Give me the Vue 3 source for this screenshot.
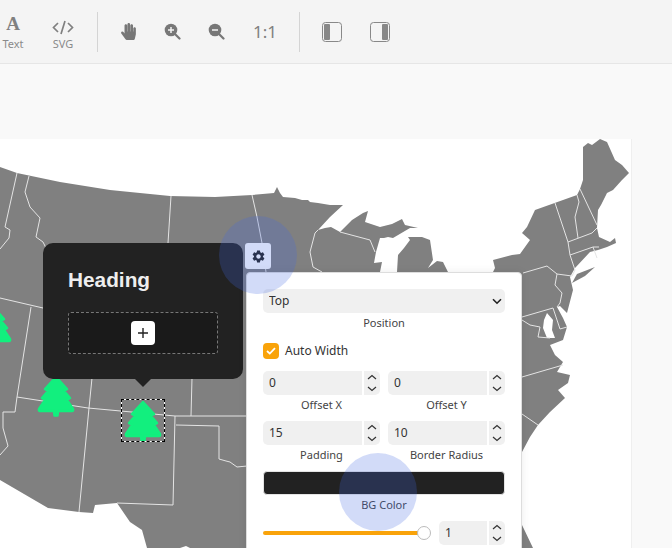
<script setup>
const land = `M0 167 L17 173 L60 182 L110 190 L170 196 L215 197 L252 195 L274 193 L277 187 L280 193 L283 197 L295 198 L302 200 L308 200 L310 202 L318 203 L330 205 L343 205
L330 217 L318 230 L325 228 L331 227 L340 232 L352 220 L363 213 L368 211 L365 222 L380 227 L392 224 L402 219 L405 225 L418 228 L410 228 L393 238 L388 237 L384 238 L380 238
L376 252 L374 263 L382 262 L380 272 L397 272 L398 255 L404 248 L410 240 L408 237 L422 237 L430 240 L433 260 L428 268 L437 261 L443 262 L448 272
L470 272 L493 272 L495 268 L493 260 L512 255 L520 254 L530 240 L522 233 L527 227 L535 210 L577 195 L580 189 L583 180 L583 147 L588 143 L592 145 L600 139 L607 142 L615 160 L622 165 L629 173 L622 180 L613 190 L607 193 L601 205 L598 210 L597 228 L599 237 L610 242 L615 238 L616 243 L607 247 L598 250 L590 252
L575 268 L570 277 L573 290 L567 313 L560 306 L557 307 L563 318 L567 327 L563 340 L550 345 L555 355 L563 362 L557 372 L570 375 L568 383 L558 390 L565 398 L550 412 L538 425 L530 437 L522 452
L522 525 L533 548 L190 548 L186 546 L180 548 L147 548 L142 530 L130 522 L117 503 L95 505 L93 513 L79 512 L48 508 L0 480 Z`

const islands = [
  'M572 283 L577 274 L595 267 L585 276 Z'
]

const water = [
  'M547 313 L553 320 L552 330 L555 338 L547 338 L543 328 L544 320 Z'
]

const borders = [
  'M17 173 L5 227 L10 230 L9 238 L0 249',
  'M29 176 L25 192 L30 207 L40 218 L36 237 L43 242 L47 250',
  'M171 196 L168 243',
  'M252 195 L257 217 L262 243 L266 272',
  'M318 230 L315 233 L310 252 L313 267 L322 272',
  'M340 232 L370 240 L375 252',
  'M0 298 L43 308',
  'M31 307 L17 397 L88 408 L175 416 L246 416',
  'M92 378 L89 408 L79 512',
  'M192 378 L191 416',
  'M175 416 L173 505 L117 503',
  'M176 425 L219 426 L219 459 L226 461 L230 462 L237 467 L247 466',
  'M17 397 L15 412 L3 412 L3 428 L8 446 L0 455',
  'M555 203 L568 242 L570 255 L575 270 L572 276',
  'M577 195 L579 202 L575 217 L578 238',
  'M580 189 L597 225',
  'M568 242 L592 233 L597 228',
  'M570 255 L593 247 L599 247',
  'M593 247 L597 258',
  'M523 273 L547 266 L557 274 L572 276',
  'M557 274 L555 285 L562 293 L560 303 L557 307',
  'M522 317 L553 308 L560 329 L567 327',
  'M522 320 L530 325 L540 327 L538 337 L550 338',
  'M522 377 L563 365',
  'M522 414 L538 425'
]

const tree = 'M19 2 L30 14 L27 16 L33 23 L30 25 L36 34 Q36.500 36 35 36 L21 36 L20.500 40.500 L17.500 40.500 L17 36 L3 36 Q1.500 36 2 34 L8 25 L5 23 L11 16 L8 14 Z'

const markers = [
  { id: 1, left: -26, top: 166 },
  { id: 2, left: 37, top: 236 },
  { id: 3, left: 124, top: 261 }
]

const campos = [
  [
    { valor: '0', etiqueta: 'Offset X' },
    { valor: '0', etiqueta: 'Offset Y' }
  ],
  [
    { valor: '15', etiqueta: 'Padding' },
    { valor: '10', etiqueta: 'Border Radius' }
  ]
]
</script>

<template>
  <div class="page">
    <header class="toolbar">
      <div class="tool first">
        <span class="letter">A</span>
        <span class="tool-label">Text</span>
      </div>
      <div class="tool">
        <svg width="22" height="15" viewBox="0 0 22 15" fill="none" stroke="#808080" stroke-width="1.7">
          <path d="M6 3 L1.5 7.500 L6 12 M16 3 L20.500 7.500 L16 12 M13 1 L9 14" />
        </svg>
        <span class="tool-label">SVG</span>
      </div>
      <div class="sep"></div>
      <div class="icon-btn">
        <svg width="15" height="17" viewBox="0 0 448 512" fill="#777">
          <path d="M408.781 128.007C386.356 127.578 368 146.36 368 168.79V256h-8V79.79c0-22.43-18.356-41.212-40.781-40.783C297.488 39.423 280 57.169 280 79v177h-8V40.79C272 18.36 253.644-.422 231.219.007 209.488.423 192 18.169 192 40v216h-8V80.79c0-22.43-18.356-41.212-40.781-40.783C121.488 40.423 104 58.169 104 80v235.992l-31.648-43.519c-12.993-17.866-38.009-21.817-55.877-8.823-17.865 12.994-21.815 38.01-8.822 55.877l125.601 172.705A48 48 0 0 0 171.074 512h197.007c22.278 0 41.63-15.308 46.714-36.993l26.212-111.397a192.011 192.011 0 0 0 5.01-43.824V168c-.017-21.912-17.611-39.575-39.236-39.993z" />
        </svg>
      </div>
      <div class="icon-btn">
        <svg width="17" height="17" viewBox="0 0 17 17">
          <circle cx="7" cy="7" r="6.3" fill="#777" />
          <path d="M11 11 L15.500 15.500" stroke="#777" stroke-width="2.2" stroke-linecap="round" />
          <path d="M4 7 H10 M7 4 V10" stroke="#f4f4f4" stroke-width="1.5" />
        </svg>
      </div>
      <div class="icon-btn">
        <svg width="17" height="17" viewBox="0 0 17 17">
          <circle cx="7" cy="7" r="6.3" fill="#777" />
          <path d="M11 11 L15.500 15.500" stroke="#777" stroke-width="2.2" stroke-linecap="round" />
          <path d="M4 7 H10" stroke="#f4f4f4" stroke-width="1.5" />
        </svg>
      </div>
      <div class="icon-btn ratio">1:1</div>
      <div class="sep second"></div>
      <div class="icon-btn side">
        <svg width="20" height="20" viewBox="0 0 20 20">
          <rect x="0.5" y="0.5" width="19" height="19" rx="3" fill="none" stroke="#888" />
          <rect x="2" y="2" width="6" height="16" rx="1" fill="#888" />
        </svg>
      </div>
      <div class="icon-btn side">
        <svg width="20" height="20" viewBox="0 0 20 20">
          <rect x="0.5" y="0.5" width="19" height="19" rx="3" fill="none" stroke="#888" />
          <rect x="12" y="2" width="6" height="16" rx="1" fill="#888" />
        </svg>
      </div>
    </header>

    <main class="workspace">
      <section class="canvas">
        <svg class="map" width="630" height="409" viewBox="0 139 630 409">
          <path :d="land" fill="#808080" />
          <path v-for="isla in islands" :key="isla" :d="isla" fill="#808080" />
          <path v-for="agua in water" :key="agua" :d="agua" fill="#fff" />
          <path
            v-for="linea in borders"
            :key="linea"
            :d="linea"
            fill="none"
            stroke="#e4e4e4"
            stroke-width="1"
            stroke-linejoin="round"
          />
        </svg>

        <svg
          v-for="m in markers"
          :key="m.id"
          class="marker"
          :style="{ left: m.left + 'px', top: m.top + 'px' }"
          width="38"
          height="42"
          viewBox="0 0 38 42"
        >
          <path :d="tree" fill="#12ef7e" stroke="#12ef7e" stroke-width="2.5" stroke-linejoin="round" />
        </svg>
        <div class="selection"></div>

        <div class="popup">
          <h2>Heading</h2>
          <div class="dropzone">
            <button class="add">
              <svg width="10" height="10" viewBox="0 0 10 10">
                <path d="M5 0 V10 M0 5 H10" stroke="#222" stroke-width="1.4" />
              </svg>
            </button>
          </div>
        </div>

        <button class="gear">
          <svg width="15" height="15" viewBox="0 0 24 24" fill="#222">
            <path fill-rule="evenodd" d="M19.14,12.94c0.04-0.3,0.06-0.61,0.06-0.94c0-0.32-0.02-0.64-0.07-0.94l2.03-1.58c0.18-0.14,0.23-0.41,0.12-0.61 l-1.92-3.32c-0.12-0.22-0.37-0.29-0.59-0.22l-2.39,0.96c-0.5-0.38-1.03-0.7-1.62-0.94L14.4,2.81c-0.04-0.24-0.24-0.41-0.48-0.41 h-3.84c-0.24,0-0.43,0.17-0.47,0.41L9.25,5.35C8.66,5.59,8.12,5.92,7.63,6.29L5.24,5.33c-0.22-0.08-0.47,0-0.59,0.22L2.74,8.87 C2.62,9.08,2.66,9.34,2.86,9.48l2.03,1.58C4.84,11.36,4.8,11.69,4.8,12s0.02,0.64,0.07,0.94l-2.03,1.58 c-0.18,0.14-0.23,0.41-0.12,0.61l1.92,3.32c0.12,0.22,0.37,0.29,0.59,0.22l2.39-0.96c0.5,0.38,1.03,0.7,1.62,0.94l0.36,2.54 c0.05,0.24,0.24,0.41,0.48,0.41h3.84c0.24,0,0.44-0.17,0.47-0.41l0.36-2.54c0.59-0.24,1.13-0.56,1.62-0.94l2.39,0.96 c0.22,0.08,0.47,0,0.59-0.22l1.92-3.32c0.12-0.22,0.07-0.47-0.12-0.61L19.14,12.94z M12,15.6c-1.98,0-3.6-1.62-3.6-3.6 s1.62-3.6,3.6-3.6s3.6,1.62,3.6,3.6S13.98,15.6,12,15.6z" />
          </svg>
        </button>

        <div class="panel">
          <div class="select-box">
            <select>
              <option>Top</option>
            </select>
            <svg class="chevron" width="10" height="7" viewBox="0 0 10 7" fill="none" stroke="#222" stroke-width="1.6">
              <path d="M1 1.2 L5 5.2 L9 1.2" />
            </svg>
          </div>
          <div class="caption">Position</div>

          <label class="check">
            <span class="box">
              <svg width="10" height="8" viewBox="0 0 10 8" fill="none" stroke="#fff" stroke-width="1.8">
                <path d="M1 4 L3.8 6.6 L9 1.2" />
              </svg>
            </span>
            <span class="check-text">Auto Width</span>
          </label>

          <div v-for="(fila, i) in campos" :key="i" class="fields">
            <div v-for="campo in fila" :key="campo.etiqueta" class="field">
              <div class="number">
                <input type="text" :value="campo.valor" />
                <div class="spin">
                  <svg width="10" height="20" viewBox="0 0 10 20" fill="none" stroke="#333" stroke-width="1.2">
                    <path d="M1 6 L5 2.500 L9 6 M1 14 L5 17.500 L9 14" />
                  </svg>
                </div>
              </div>
              <div class="caption">{{ campo.etiqueta }}</div>
            </div>
          </div>

          <div class="color"></div>
          <div class="caption">BG Color</div>

          <div class="opacity">
            <div class="slider">
              <div class="thumb"></div>
            </div>
            <div class="number small">
              <input type="text" value="1" />
              <div class="spin">
                <svg width="10" height="20" viewBox="0 0 10 20" fill="none" stroke="#333" stroke-width="1.2">
                  <path d="M1 6 L5 2.500 L9 6 M1 14 L5 17.500 L9 14" />
                </svg>
              </div>
            </div>
          </div>
        </div>

        <div class="pulse one"></div>
        <div class="pulse two"></div>
      </section>
    </main>
  </div>
</template>

<style scoped>
.page {
  display: flex;
  flex-direction: column;
  width: 672px;
  height: 548px;
  overflow: hidden;
  font-family: "Noto Sans", "Open Sans", sans-serif;
  color: #333;
}

.toolbar {
  display: flex;
  align-items: center;
  flex: none;
  height: 63px;
  background: #f4f4f4;
  border-bottom: 1px solid #e6e6e6;
}

.tool {
  display: flex;
  flex-direction: column;
  align-items: center;
  justify-content: flex-end;
  flex: none;
  width: 50px;
  height: 38px;
  gap: 1px;
}

.tool.first {
  margin-left: -12px;
}

.letter {
  margin-top: -2px;
  padding-bottom: 2px;
  font-family: "Liberation Serif", serif;
  font-weight: bold;
  font-size: 19px;
  line-height: 19px;
  color: #808080;
}

.tool-label {
  font-size: 11px;
  line-height: 15px;
  color: #8a8a8a;
}

.sep {
  flex: none;
  width: 1px;
  height: 40px;
  margin: 0 8px 0 9px;
  background: #d4d4d4;
}

.sep.second {
  margin: 0 8px;
}

.icon-btn {
  display: flex;
  align-items: center;
  justify-content: center;
  flex: none;
  width: 44px;
  height: 40px;
}

.ratio {
  width: 52px;
  margin-left: 1px;
  font-size: 17px;
  color: #808080;
}

.side {
  width: 48px;
}

.workspace {
  display: flex;
  flex: 1;
  min-height: 0;
  padding: 75px 41px 0 0;
  background: #f9f9f9;
}

.canvas {
  position: relative;
  flex: 1;
  background: #fff;
  box-shadow: 1px 0 0 #efefef;
}

.map {
  position: absolute;
  top: 0;
  left: 0;
}

.marker {
  position: absolute;
}

.selection {
  position: absolute;
  left: 121px;
  top: 260px;
  box-sizing: border-box;
  width: 44px;
  height: 43px;
  border: 1px solid #fff;
}

.selection::after {
  content: "";
  position: absolute;
  inset: -1px;
  border: 1px dashed #000;
}

.popup {
  position: absolute;
  left: 43px;
  top: 104px;
  box-sizing: border-box;
  width: 200px;
  height: 136px;
  padding: 25px;
  border-radius: 10px;
  background: #222;
}

.popup::after {
  content: "";
  position: absolute;
  left: 92px;
  bottom: -8px;
  border-style: solid;
  border-width: 8px 8px 0;
  border-color: #222 transparent transparent;
}

.popup h2 {
  margin: 0 0 20px;
  font-family: "Liberation Sans", Arial, sans-serif;
  font-size: 20.8px;
  line-height: 24px;
  font-weight: bold;
  color: #eee;
}

.dropzone {
  display: flex;
  align-items: center;
  justify-content: center;
  box-sizing: border-box;
  width: 150px;
  height: 42px;
  border: 1px dashed #777;
  border-radius: 3px;
  background: #1a1a1a;
}

.add {
  display: flex;
  align-items: center;
  justify-content: center;
  width: 24px;
  height: 24px;
  padding: 0;
  border: none;
  border-radius: 4px;
  background: #fff;
}

.gear {
  position: absolute;
  left: 245px;
  top: 104px;
  display: flex;
  align-items: center;
  justify-content: center;
  width: 26px;
  height: 26px;
  padding: 0;
  border: none;
  border-radius: 3px;
  background: #fff;
}

.panel {
  position: absolute;
  left: 246px;
  top: 133px;
  box-sizing: border-box;
  width: 276px;
  height: 320px;
  padding: 16px 16px 0;
  border: 1px solid #ddd;
  border-radius: 4px;
  background: #fff;
  box-shadow: 0 0 8px rgba(0, 0, 0, 0.08);
}

.select-box {
  position: relative;
  height: 24px;
}

.select-box select {
  display: block;
  width: 100%;
  height: 24px;
  padding: 0 6px 2px;
  border: none;
  border-radius: 5px;
  background: #f0f0f0;
  font: inherit;
  font-size: 12px;
  color: #333;
  appearance: none;
}

.chevron {
  position: absolute;
  top: 9px;
  right: 3px;
}

.caption {
  margin-top: 2px;
  margin-bottom: 1px;
  font-size: 11px;
  line-height: 15px;
  text-align: center;
  color: #444;
}

.check {
  display: flex;
  align-items: center;
  gap: 6px;
  height: 16px;
  margin: 13px 0 12px;
  font-size: 12px;
  color: #333;
}

.check-text {
  margin-top: -1px;
}

.box {
  display: flex;
  align-items: center;
  justify-content: center;
  width: 16px;
  height: 16px;
  border-radius: 4px;
  background: #f9a30a;
}

.fields {
  display: grid;
  grid-template-columns: 117px 117px;
  gap: 8px;
  margin-bottom: 8px;
}

.number {
  display: flex;
  gap: 2px;
  height: 24px;
}

.number input {
  flex: 1;
  min-width: 0;
  box-sizing: border-box;
  height: 24px;
  padding: 0 6px 2px;
  border: none;
  border-radius: 5px 0 0 5px;
  background: #f0f0f0;
  font: inherit;
  font-size: 12px;
  color: #333;
}

.spin {
  display: flex;
  align-items: center;
  justify-content: center;
  flex: none;
  width: 16px;
  height: 24px;
  border-radius: 0 5px 5px 0;
  background: #f0f0f0;
}

.color {
  box-sizing: border-box;
  height: 24px;
  border: 1px solid #e4e4e4;
  border-radius: 4px;
  background: #222;
}

.opacity {
  display: flex;
  align-items: center;
  gap: 15px;
  margin-top: 9px;
}

.slider {
  position: relative;
  flex: 1;
  height: 4px;
  border-radius: 2px;
  background: #f9a30a;
}

.thumb {
  position: absolute;
  right: -7px;
  top: -5px;
  box-sizing: border-box;
  width: 14px;
  height: 14px;
  border: 1px solid #bbb;
  border-radius: 50%;
  background: #fff;
}

.number.small {
  flex: none;
  width: 66px;
}

.pulse {
  position: absolute;
  width: 78px;
  height: 78px;
  border-radius: 50%;
  background: rgba(66, 105, 225, 0.24);
}

.pulse.one {
  left: 219px;
  top: 77px;
}

.pulse.two {
  left: 339px;
  top: 314px;
}
</style>

<style>
html,
body {
  margin: 0;
  background: #f9f9f9;
}
</style>
